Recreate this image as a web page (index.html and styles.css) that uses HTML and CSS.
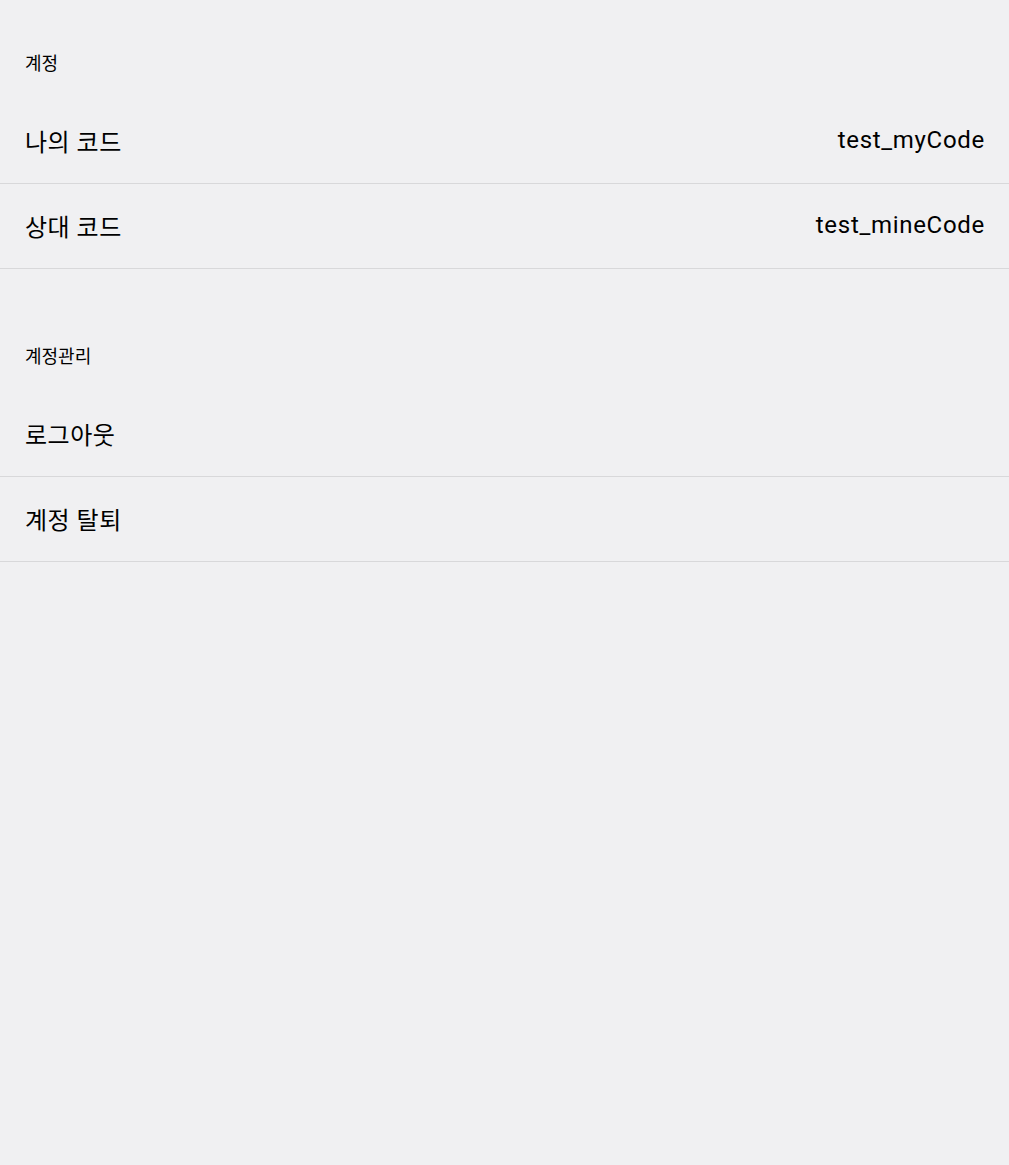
FILE: index.html
```html
<!DOCTYPE html>
<html lang="ko">
<head>
<meta charset="utf-8">
<link rel="stylesheet" href="styles.css">
</head>
<body>
<div class="page">
  <section class="section">
    <div class="section-title">계정</div>
    <div class="row"><span class="label">나의 코드</span><span class="value">test_myCode</span></div>
    <div class="row"><span class="label">상대 코드</span><span class="value">test_mineCode</span></div>
  </section>
  <section class="section second">
    <div class="section-title">계정관리</div>
    <div class="row"><span class="label">로그아웃</span></div>
    <div class="row"><span class="label">계정 탈퇴</span></div>
  </section>
</div>
</body>
</html>
```
FILE: styles.css
```css
html, body {
  margin: 0;
  padding: 0;
  background: #f0f0f2;
}
body {
  font-family: Roboto, "Noto Sans CJK KR", sans-serif;
  color: #000;
  min-height: 1165px;
}
.page {
  display: flex;
  flex-direction: column;
}
.section {
  display: flex;
  flex-direction: column;
}
.section.second {
  margin-top: 24px;
}
.section-title {
  height: 99px;
  box-sizing: border-box;
  display: flex;
  align-items: flex-end;
  padding: 0 25px 23px;
  font-size: 18px;
  line-height: 24px;
}
.row {
  height: 85px;
  box-sizing: border-box;
  border-bottom: 1px solid #d8d8da;
  display: flex;
  align-items: center;
  justify-content: space-between;
  padding: 0 24px 2px 25px;
  font-size: 24px;
  letter-spacing: 0.5px;
}
.value {
  letter-spacing: 0.7px;
}
```
